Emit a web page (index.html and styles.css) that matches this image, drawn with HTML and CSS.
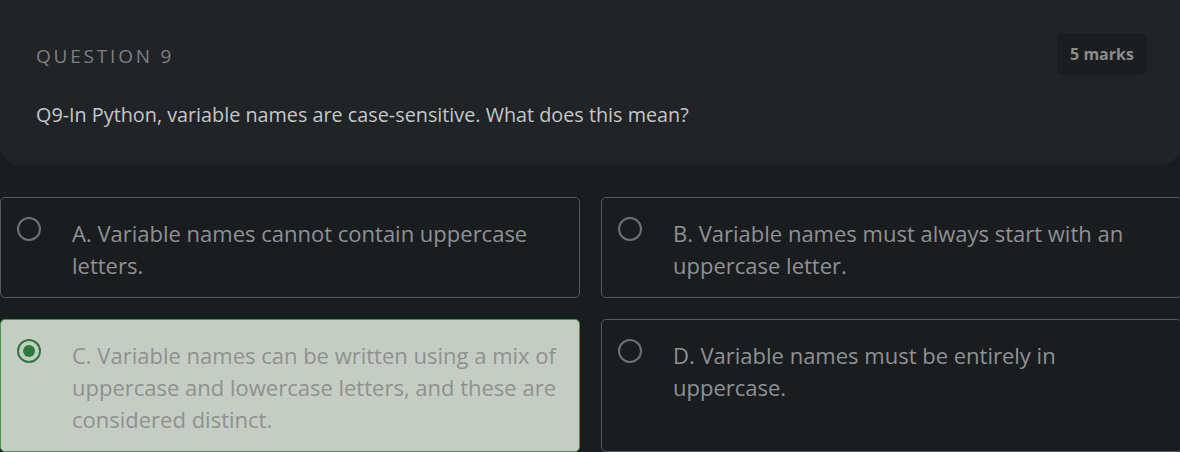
FILE: index.html
```html
<!DOCTYPE html>
<html>
<head>
<meta charset="utf-8">
<link rel="stylesheet" href="styles.css">
</head>
<body>
<div class="page">
  <section class="question-card">
    <div class="question-head">
      <div class="question-label">QUESTION 9</div>
      <div class="marks">5 marks</div>
    </div>
    <p class="question-text">Q9-In Python, variable names are case-sensitive. What does this mean?</p>
  </section>
  <div class="options">
    <div class="option">
      <span class="radio"></span>
      <span class="option-text">A. Variable names cannot contain uppercase letters.</span>
    </div>
    <div class="option">
      <span class="radio"></span>
      <span class="option-text">B. Variable names must always start with an uppercase letter.</span>
    </div>
    <div class="option selected">
      <span class="radio"></span>
      <span class="option-text">C. Variable names can be written using a mix of uppercase and lowercase letters, and these are considered distinct.</span>
    </div>
    <div class="option">
      <span class="radio"></span>
      <span class="option-text">D. Variable names must be entirely in uppercase.</span>
    </div>
  </div>
</div>
</body>
</html>
```
FILE: styles.css
```css
html, body {
  margin: 0;
  padding: 0;
  background: #1a1d20;
  overflow: hidden;
}
body {
  font-family: "Open Sans", "Noto Sans", sans-serif;
  width: 1180px;
  height: 452px;
}
.page {
  width: 1182px;
}
.question-card {
  width: 1180px;
  box-sizing: border-box;
  background: #212427;
  border-radius: 0 0 20px 20px;
  padding: 33px 33px 0 36px;
  height: 165px;
}
.question-head {
  display: flex;
  justify-content: space-between;
  align-items: flex-start;
}
.question-label {
  margin-top: 10px;
  font-size: 19px;
  font-weight: 500;
  letter-spacing: 2.8px;
  color: #7e8082;
  line-height: 26px;
}
.marks {
  background: #1b1e20;
  border-radius: 5px;
  height: 42px;
  width: 90px;
  display: flex;
  align-items: center;
  justify-content: center;
  font-weight: 700;
  font-size: 16px;
  color: #8a8b8c;
}
.question-text {
  margin: 28px 0 0 0;
  font-size: 19.8px;
  line-height: 24px;
  color: #c4c7ca;
}
.options {
  display: grid;
  grid-template-columns: 580px 581px;
  column-gap: 21px;
  row-gap: 21px;
  margin-top: 32px;
}
.option {
  display: flex;
  align-items: flex-start;
  gap: 31px;
  border: 1px solid #55585c;
  border-radius: 5px;
  padding: 18px 16px 16px 16px;
  box-sizing: border-box;
  min-height: 101px;
}
.radio {
  flex: none;
  width: 24px;
  height: 24px;
  box-sizing: border-box;
  border: 2px solid #6e7174;
  border-radius: 50%;
  margin-top: 1px;
  display: flex;
  align-items: center;
  justify-content: center;
}
.option-text {
  font-size: 22px;
  line-height: 32px;
  color: #8f9194;
  margin-top: 1px;
}
.option.selected {
  background: #c5ccc4;
  border-color: #3e9a4c;
}
.option.selected .radio {
  border-color: #2b7a3d;
}
.option.selected .radio::after {
  content: "";
  width: 12px;
  height: 12px;
  border-radius: 50%;
  background: #2b7a3d;
}
.option.selected .option-text {
  color: #8e928e;
}
```
